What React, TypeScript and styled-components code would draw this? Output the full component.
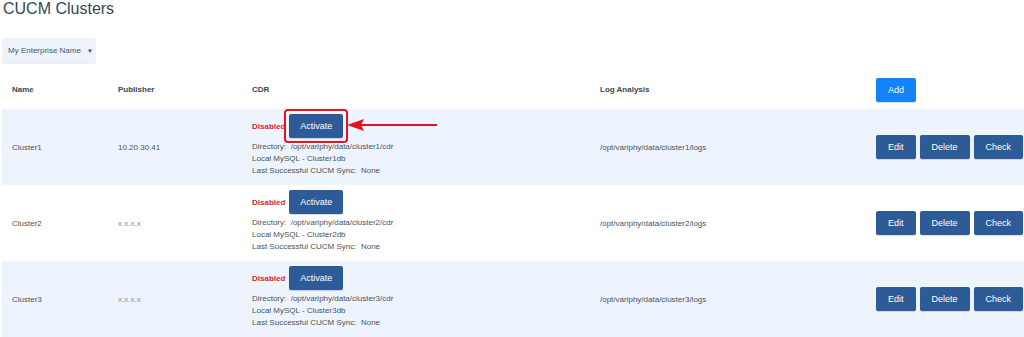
import React, { FC } from 'react';
import styled, { createGlobalStyle } from 'styled-components';

const GlobalStyle = createGlobalStyle`
  body {
    margin: 0;
    background: #ffffff;
    font-family: "Liberation Sans", Arial, sans-serif;
  }
`;

interface Cluster {
  name: string;
  publisher: string;
  highlight?: boolean;
}

const clusters: Cluster[] = [
  { name: 'Cluster1', publisher: '10.20.30.41', highlight: true },
  { name: 'Cluster2', publisher: 'x.x.x.x' },
  { name: 'Cluster3', publisher: 'x.x.x.x' },
];

const App: FC = () => {
  return (
    <StyledPage>
      <GlobalStyle />
      <StyledTitle>CUCM Clusters</StyledTitle>
      <StyledToolbar>
        <StyledSelect>
          My Enterprise Name <StyledCaret>▼</StyledCaret>
        </StyledSelect>
      </StyledToolbar>
      <StyledTable>
        <StyledHeadRow>
          <StyledHeadCell>Name</StyledHeadCell>
          <StyledHeadCell>Publisher</StyledHeadCell>
          <StyledHeadCell>CDR</StyledHeadCell>
          <StyledHeadCell>Log Analysis</StyledHeadCell>
          <StyledCell>
            <StyledButton $variant="primary">Add</StyledButton>
          </StyledCell>
        </StyledHeadRow>
        {clusters.map((item, index) => {
          const n = index + 1;
          return (
            <StyledRow key={item.name} $striped={index % 2 === 0}>
              <StyledCell>{item.name}</StyledCell>
              <StyledCell $muted={item.publisher === 'x.x.x.x'}>
                {item.publisher}
              </StyledCell>
              <StyledCell>
                <StyledCdr>
                  <StyledStatusLine>
                    <StyledDisabled>Disabled</StyledDisabled>
                    <StyledActivateWrap $highlight={item.highlight}>
                      <StyledButton $variant="dark" $wide>
                        Activate
                      </StyledButton>
                      {item.highlight && (
                        <StyledArrow
                          width="92"
                          height="14"
                          viewBox="0 0 92 14"
                        >
                          <path d="M10 6 H90 V8 H10 Z" fill="#e3131b" />
                          <path d="M0 7 L17 1 L14 7 L17 13 Z" fill="#e3131b" />
                        </StyledArrow>
                      )}
                    </StyledActivateWrap>
                  </StyledStatusLine>
                  <StyledLine>
                    Directory:&nbsp; /opt/variphy/data/cluster{n}/cdr
                  </StyledLine>
                  <StyledLine>Local MySQL - Cluster{n}db</StyledLine>
                  <StyledLine>Last Successful CUCM Sync:&nbsp; None</StyledLine>
                </StyledCdr>
              </StyledCell>
              <StyledCell>/opt/variphy/data/cluster{n}/logs</StyledCell>
              <StyledCell>
                <StyledActions>
                  <StyledButton $variant="dark">Edit</StyledButton>
                  <StyledButton $variant="dark">Delete</StyledButton>
                  <StyledButton $variant="dark">Check</StyledButton>
                </StyledActions>
              </StyledCell>
            </StyledRow>
          );
        })}
      </StyledTable>
    </StyledPage>
  );
};

const StyledPage = styled.div`
  width: 1024px;
  height: 337px;
  overflow: hidden;
`;
const StyledTitle = styled.h1`
  margin: 0;
  padding: 0 0 0 3px;
  font-size: 16px;
  line-height: 17px;
  font-weight: normal;
  color: #34475b;
`;
const StyledToolbar = styled.div`
  display: flex;
  padding: 21px 0 0 2px;
  height: 32px;
`;
const StyledSelect = styled.div`
  display: flex;
  align-items: center;
  height: 25px;
  width: 94px;
  box-sizing: border-box;
  padding-left: 6px;
  white-space: nowrap;
  background: #edf2fb;
  border-radius: 3px;
  box-shadow: 0 1px 1px rgba(0, 0, 0, 0.08);
  font-size: 8px;
  color: #4b5868;
`;
const StyledCaret = styled.span`
  margin-left: 6px;
  font-size: 6px;
  color: #3d4a5a;
`;
const StyledTable = styled.div`
  display: flex;
  flex-direction: column;
  padding-left: 2px;
`;
const rowGrid = `
  display: grid;
  grid-template-columns: 106px 134px 348px 276px 1fr;
  align-items: center;
`;
const StyledHeadRow = styled.div`
  ${rowGrid};
  height: 39px;
`;
const StyledRow = styled.div<{ $striped: boolean }>`
  ${rowGrid};
  height: 76px;
  background: ${({ $striped }) => ($striped ? '#eef4fd' : '#ffffff')};
`;
const StyledCell = styled.div<{ $muted?: boolean }>`
  padding-left: 10px;
  font-size: 8px;
  white-space: nowrap;
  color: ${({ $muted }) => ($muted ? '#8a8f96' : '#4a525c')};
`;
const StyledHeadCell = styled.div`
  padding-left: 10px;
  font-size: 8px;
  font-weight: bold;
  color: #3b4450;
`;
const StyledCdr = styled.div`
  display: flex;
  flex-direction: column;
  padding-bottom: 3px;
`;
const StyledStatusLine = styled.div`
  display: flex;
  align-items: center;
  margin-bottom: 3px;
`;
const StyledDisabled = styled.span`
  font-weight: bold;
  color: #d9232d;
  margin-right: 4px;
`;
const StyledActivateWrap = styled.div<{ $highlight?: boolean }>`
  position: relative;
  display: flex;
  ${({ $highlight }) =>
    $highlight &&
    `
    &::after {
      content: '';
      position: absolute;
      left: -5px;
      right: -5px;
      top: -5px;
      bottom: -5px;
      border: 2px solid #e8141c;
      border-radius: 4px;
      pointer-events: none;
    }
  `}
`;
const StyledArrow = styled.svg`
  position: absolute;
  left: calc(100% + 4px);
  top: 4px;
`;
const StyledLine = styled.div`
  line-height: 12px;
  color: #4a525c;
`;
const StyledActions = styled.div`
  display: flex;
  gap: 4px;
`;
const StyledButton = styled.button<{ $variant: 'primary' | 'dark'; $wide?: boolean }>`
  height: 24px;
  padding: 0 ${({ $wide }) => ($wide ? '11px' : '12px')};
  border: none;
  border-radius: 2px;
  font-family: "Liberation Sans", Arial, sans-serif;
  font-size: 9px;
  color: #ffffff;
  background: ${({ $variant }) => ($variant === 'primary' ? '#1482fa' : '#2d5b98')};
  box-shadow: 0 1px 1px rgba(0, 0, 0, 0.15);
  cursor: pointer;
`;

export default App;
